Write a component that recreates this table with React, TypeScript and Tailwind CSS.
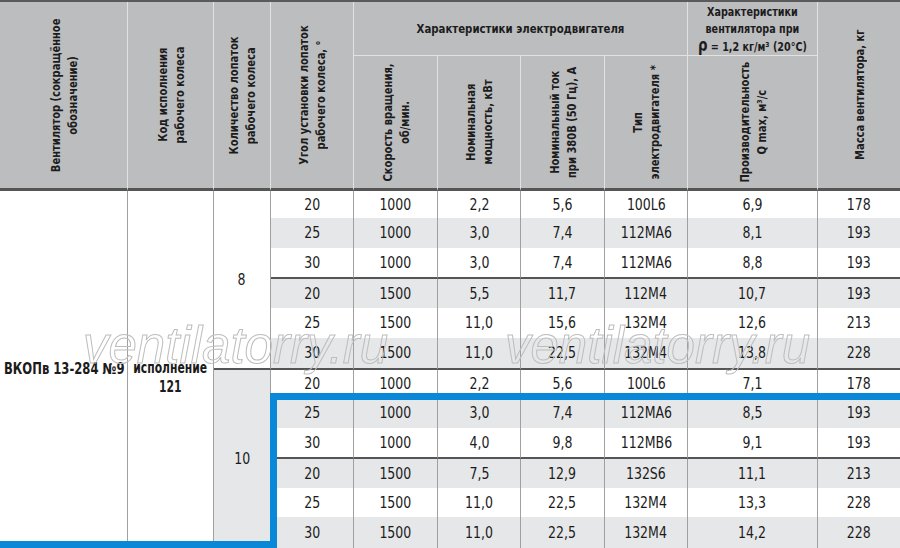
import React from "react";

type Row = [string, string, string, string, string, string, string];

const rows: Row[] = [
  ["20", "1000", "2,2", "5,6", "100L6", "6,9", "178"],
  ["25", "1000", "3,0", "7,4", "112MA6", "8,1", "193"],
  ["30", "1000", "3,0", "7,4", "112MA6", "8,8", "193"],
  ["20", "1500", "5,5", "11,7", "112M4", "10,7", "193"],
  ["25", "1500", "11,0", "15,6", "132M4", "12,6", "213"],
  ["30", "1500", "11,0", "22,5", "132M4", "13,8", "228"],
  ["20", "1000", "2,2", "5,6", "100L6", "7,1", "178"],
  ["25", "1000", "3,0", "7,4", "112MA6", "8,5", "193"],
  ["30", "1000", "4,0", "9,8", "112MB6", "9,1", "193"],
  ["20", "1500", "7,5", "12,9", "132S6", "11,1", "213"],
  ["25", "1500", "11,0", "22,5", "132M4", "13,3", "228"],
  ["30", "1500", "11,0", "22,5", "132M4", "14,2", "228"],
];

const head =
  "bg-[#bcbdbf] flex items-center justify-center text-[13px] font-bold leading-[17px] text-[#1c1c1c] border-r border-r-[#e2e2e2]";
const headBottom = "border-b-[3px] border-b-[#555555]";

// vertical header text, reads bottom to top
const VText: React.FC<{ children: React.ReactNode }> = ({ children }) => (
  <div className="[writing-mode:vertical-rl] rotate-180 scale-y-[0.85] text-center whitespace-nowrap">{children}</div>
);

const Num: React.FC<{ children: React.ReactNode }> = ({ children }) => (
  <span className="inline-block scale-x-[0.87] whitespace-nowrap">{children}</span>
);

const App: React.FC = () => {
  return (
    <div className="relative w-[900px] h-[548px] overflow-hidden bg-white font-['DejaVu_Sans_Condensed','Liberation_Sans',sans-serif]">
      <div className="grid border-t-2 border-t-[#5a5a5a] grid-cols-[128px_86px_57px_83px_84px_83px_84px_83px_130px_82px] grid-rows-[54px_135px_27px_30px_31px_29px_30px_32px_28px_30px_31px_29px_29px_31px]">
        {/* HEADER */}
        <div className={`${head} ${headBottom} row-span-2`}>
          <VText>
            Вентилятор (сокращённое
            <br />
            обозначение)
          </VText>
        </div>
        <div className={`${head} ${headBottom} row-span-2`}>
          <VText>
            Код исполнения
            <br />
            рабочего колеса
          </VText>
        </div>
        <div className={`${head} ${headBottom} row-span-2`}>
          <VText>
            Количество лопаток
            <br />
            рабочего колеса
          </VText>
        </div>
        <div className={`${head} ${headBottom} row-span-2`}>
          <VText>
            Угол установки лопаток
            <br />
            рабочего колеса, °
          </VText>
        </div>
        <div className={`${head} col-span-4 border-b border-b-[#e2e2e2]`}>
          <span className="inline-block scale-x-[0.87] whitespace-nowrap">Характеристики электродвигателя</span>
        </div>
        <div className={`${head} border-b border-b-[#e2e2e2] leading-[15.5px]`}>
          <div className="scale-x-[0.82] text-center whitespace-nowrap">
            Характеристики
            <br />
            вентилятора при
            <br />
            <span className="text-[18px] leading-[15px]">ρ</span> = 1,2 кг/м³ (20°C)
          </div>
        </div>
        <div className={`${head} ${headBottom} row-span-2 border-r-0`}>
          <VText>Масса вентилятора, кг</VText>
        </div>
        <div className={`${head} ${headBottom}`}>
          <VText>
            Скорость вращения,
            <br />
            об/мин.
          </VText>
        </div>
        <div className={`${head} ${headBottom}`}>
          <VText>
            Номинальная
            <br />
            мощность, кВт
          </VText>
        </div>
        <div className={`${head} ${headBottom}`}>
          <VText>
            Номинальный ток
            <br />
            при 380В (50 Гц), А
          </VText>
        </div>
        <div className={`${head} ${headBottom}`}>
          <VText>
            Тип
            <br />
            электродвигателя *
          </VText>
        </div>
        <div className={`${head} ${headBottom}`}>
          <VText>
            Производительность
            <br />
            Q max, м³/с
          </VText>
        </div>

        {/* BODY */}
        <div className="row-span-12 flex items-center pl-1 bg-white border-r border-r-[#a0a0a0] text-[15px] font-bold text-[#1b1b1b]">
          <span className="inline-block origin-left scale-x-[0.86] whitespace-nowrap">ВКОПв 13-284 №9</span>
        </div>
        <div className="row-span-12 flex items-center justify-center pt-[17px] bg-white border-r border-r-[#a0a0a0] text-[15px] font-bold leading-[19px] text-[#1b1b1b] text-center">
          <div className="scale-x-[0.8] whitespace-nowrap">
            исполнение
            <br />
            121
          </div>
        </div>
        <div className="row-span-6 flex items-center justify-center bg-white border-r border-r-[#a0a0a0] border-b-2 border-b-[#555555] text-[16px] text-[#1b1b1b]">
          <Num>8</Num>
        </div>
        {rows.map((r, i) => (
          <React.Fragment key={i}>
            {i === 6 && (
              <div className="row-span-6 flex items-center justify-center bg-[#e6e7e8] border-r border-r-[#a0a0a0] text-[16px] text-[#1b1b1b]">
                <Num>10</Num>
              </div>
            )}
            {r.map((v, j) => (
              <div
                key={j}
                className={`flex items-center justify-center text-[16px] text-[#1b1b1b] ${
                  i % 2 === 1 ? "bg-[#e6e7e8]" : "bg-white"
                } ${j < 6 ? "border-r border-r-[#a0a0a0]" : ""} ${
                  i === 2 || i === 5 || i === 8 ? "border-b-2 border-b-[#555555]" : ""
                }`}
              >
                <Num>{v}</Num>
              </div>
            ))}
          </React.Fragment>
        ))}
      </div>

      {/* watermark */}
      <div className="absolute left-[83px] top-[321px] text-[51px] leading-[50px] italic font-['Liberation_Sans',sans-serif] text-transparent [-webkit-text-stroke:1px_#bdbdbd] pointer-events-none">
        ventilatorry.ru
      </div>
      <div className="absolute left-[505px] top-[321px] text-[51px] leading-[50px] italic font-['Liberation_Sans',sans-serif] text-transparent [-webkit-text-stroke:1px_#bdbdbd] pointer-events-none">
        ventilatorry.ru
      </div>

      {/* selection frame */}
      <div className="absolute left-[270px] top-[393px] w-[630px] h-[7px] bg-[#0a88d8]" />
      <div className="absolute left-[270px] top-[393px] w-[7px] h-[155px] bg-[#0a88d8]" />
      <div className="absolute left-0 top-[541px] w-[277px] h-[7px] bg-[#0a88d8]" />
    </div>
  );
};

export default App;
